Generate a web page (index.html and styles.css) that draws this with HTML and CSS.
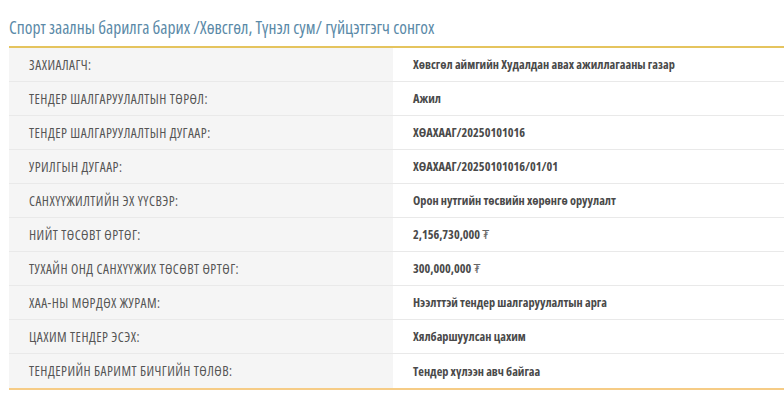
FILE: index.html
```html
<!DOCTYPE html>
<html lang="mn">
<head>
<meta charset="utf-8">
<title>Тендер</title>
<link rel="stylesheet" href="styles.css">
</head>
<body>
<div class="page">
  <h1 class="title">Спорт заалны барилга барих /Хөвсгөл, Түнэл сум/ гүйцэтгэгч сонгох</h1>
  <div class="table">
    <div class="row"><div class="label">ЗАХИАЛАГЧ:</div><div class="value">Хөвсгөл аймгийн Худалдан авах ажиллагааны газар</div></div>
    <div class="row"><div class="label">ТЕНДЕР ШАЛГАРУУЛАЛТЫН ТӨРӨЛ:</div><div class="value">Ажил</div></div>
    <div class="row"><div class="label">ТЕНДЕР ШАЛГАРУУЛАЛТЫН ДУГААР:</div><div class="value">ХӨАХААГ/20250101016</div></div>
    <div class="row"><div class="label">УРИЛГЫН ДУГААР:</div><div class="value">ХӨАХААГ/20250101016/01/01</div></div>
    <div class="row"><div class="label">САНХҮҮЖИЛТИЙН ЭХ ҮҮСВЭР:</div><div class="value">Орон нутгийн төсвийн хөрөнгө оруулалт</div></div>
    <div class="row"><div class="label">НИЙТ ТӨСӨВТ ӨРТӨГ:</div><div class="value">2,156,730,000&nbsp;<span class="cur">₮</span></div></div>
    <div class="row"><div class="label">ТУХАЙН ОНД САНХҮҮЖИХ ТӨСӨВТ ӨРТӨГ:</div><div class="value">300,000,000&nbsp;<span class="cur">₮</span></div></div>
    <div class="row"><div class="label">ХАА-НЫ МӨРДӨХ ЖУРАМ:</div><div class="value">Нээлттэй тендер шалгаруулалтын арга</div></div>
    <div class="row"><div class="label">ЦАХИМ ТЕНДЕР ЭСЭХ:</div><div class="value">Хялбаршуулсан цахим</div></div>
    <div class="row"><div class="label">ТЕНДЕРИЙН БАРИМТ БИЧГИЙН ТӨЛӨВ:</div><div class="value">Тендер хүлээн авч байгаа</div></div>
  </div>
</div>
</body>
</html>
```

FILE: styles.css
```css
html, body {
  margin: 0;
  padding: 0;
  background: #ffffff;
}
body {
  font-family: "Open Sans", "DejaVu Sans Condensed", sans-serif;
  font-stretch: 75%;
}
.page {
  padding: 0 0 0 9px;
}
.title {
  margin: 0;
  padding: 17px 0 0 0;
  height: 29px;
  box-sizing: border-box;
  font-size: 17.5px;
  font-weight: normal;
  line-height: 20px;
  color: #5b8aa8;
}
.table {
  border-top: 2px solid #e5c45e;
  border-bottom: 2px solid #f6cc86;
  margin-top: 17px;
}
.row {
  display: grid;
  grid-template-columns: 384px 1fr;
  height: 34px;
  box-sizing: border-box;
  border-bottom: 1px solid #e9e9e9;
}
.row:last-child {
  border-bottom: none;
}
.label {
  background: #f5f5f5;
  padding-left: 20px;
  display: flex;
  align-items: center;
  font-size: 13.5px;
  letter-spacing: 0.45px;
  color: #555555;
}
.value {
  padding-left: 20px;
  display: flex;
  align-items: center;
  font-size: 12.3px;
  font-weight: bold;
  color: #4a4a4a;
}
.cur {
  font-weight: normal;
  font-size: 12px;
  color: #666666;
}
```
